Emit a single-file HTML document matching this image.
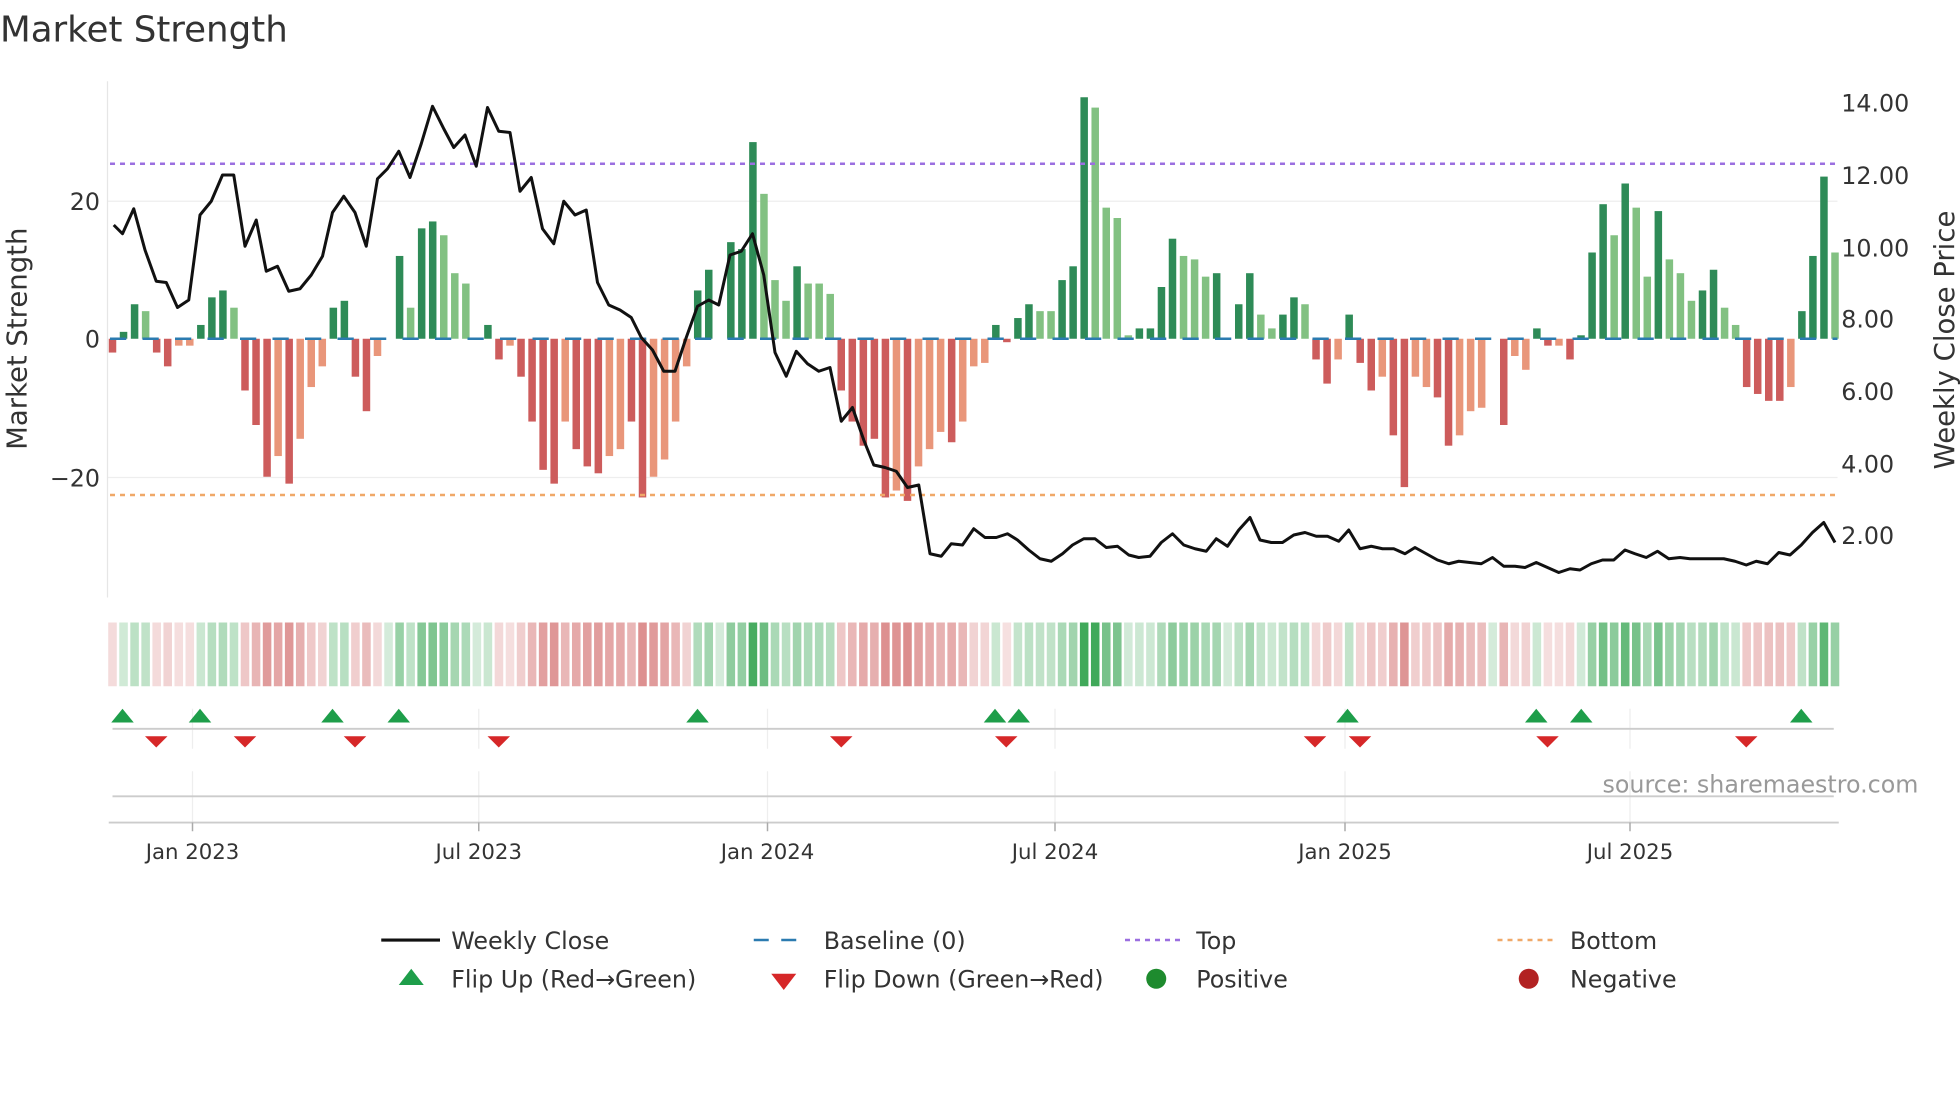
<!DOCTYPE html>
<html><head><meta charset="utf-8">
<style>
html,body{margin:0;padding:0;background:#fff;}
svg{display:block;}
text{font-family:"DejaVu Sans","Liberation Sans",sans-serif;fill:#333;}
</style></head>
<body>
<svg id="s" width="1960" height="1102" viewBox="0 0 1568 881.6" xmlns="http://www.w3.org/2000/svg">
<rect width="1568" height="882" fill="#fff"/>
<text x="0" y="33" font-size="28.5">Market Strength</text>
<g stroke="#eeeeee" stroke-width="1">
<line x1="86" y1="161" x2="1470" y2="161"/>
<line x1="86" y1="382" x2="1470" y2="382"/>
</g>
<line x1="86" y1="65" x2="86" y2="478" stroke="#e6e6e6" stroke-width="1"/>
<g id="bars"></g>
<g id="zero"></g>
<line x1="88" y1="131" x2="1470" y2="131" stroke="#9b6fe0" stroke-width="2" stroke-dasharray="4 4"/>
<line x1="88" y1="396" x2="1470" y2="396" stroke="#f0a868" stroke-width="2" stroke-dasharray="4 4"/>
<polyline id="price" fill="none" stroke="#111" stroke-width="2.4" stroke-linejoin="round"/>
<g font-size="19" text-anchor="end">
<text x="80" y="168">20</text><text x="80" y="278">0</text><text x="80" y="389">−20</text>
</g>
<g font-size="19">
<text x="1473" y="89">14.00</text><text x="1473" y="147">12.00</text><text x="1473" y="205">10.00</text>
<text x="1473" y="262">8.00</text><text x="1473" y="320">6.00</text><text x="1473" y="378">4.00</text>
<text x="1473" y="435">2.00</text>
</g>
<text transform="translate(21,271) rotate(-90)" font-size="22" text-anchor="middle">Market Strength</text>
<text transform="translate(1563,272) rotate(-90)" font-size="22" text-anchor="middle">Weekly Close Price</text>
<g id="heat"></g>
<g stroke="#eeeeee" stroke-width="1" id="vgrid"></g>
<line x1="90" y1="583" x2="1467" y2="583" stroke="#cccccc" stroke-width="1.5"/>
<g id="flips"></g>
<line x1="90" y1="637" x2="1467" y2="637" stroke="#cccccc" stroke-width="1.5"/>
<line x1="87" y1="658" x2="1471" y2="658" stroke="#cccccc" stroke-width="1.5"/>
<g id="ticks" stroke="#aaa" stroke-width="1.2"></g>
<text x="1282" y="634" font-size="19" style="fill:#999">source: sharemaestro.com</text>
<g font-size="17" text-anchor="middle">
<text x="154" y="687">Jan 2023</text><text x="383" y="687">Jul 2023</text><text x="614" y="687">Jan 2024</text>
<text x="844" y="687">Jul 2024</text><text x="1076" y="687">Jan 2025</text><text x="1304" y="687">Jul 2025</text>
</g>
<line x1="305" y1="752" x2="352" y2="752" stroke="#111" stroke-width="2.5"/>
<text x="361" y="759" font-size="19">Weekly Close</text>
<line x1="603" y1="752" x2="647" y2="752" stroke="#2b7bb0" stroke-width="2" stroke-dasharray="12 10"/>
<text x="659" y="759" font-size="19">Baseline (0)</text>
<line x1="900" y1="752" x2="945" y2="752" stroke="#9b6fe0" stroke-width="2" stroke-dasharray="4 4"/>
<text x="957" y="759" font-size="19">Top</text>
<line x1="1198" y1="752" x2="1243" y2="752" stroke="#f0a868" stroke-width="2" stroke-dasharray="4 4"/>
<text x="1256" y="759" font-size="19">Bottom</text>
<polygon points="319,788 339,788 329,775" fill="#1e9e4a"/>
<text x="361" y="790" font-size="19">Flip Up (Red→Green)</text>
<polygon points="617,779 637,779 627,792" fill="#d62728"/>
<text x="659" y="790" font-size="19">Flip Down (Green→Red)</text>
<circle cx="925" cy="783" r="8" fill="#1e8b2e"/>
<text x="957" y="790" font-size="19">Positive</text>
<circle cx="1223" cy="783" r="8" fill="#b22222"/>
<text x="1256" y="790" font-size="19">Negative</text>
</svg>
<script>
(function(){
var NS="http://www.w3.org/2000/svg";
function el(t,a,p){var e=document.createElementNS(NS,t);for(var k in a)e.setAttribute(k,a[k]);p.appendChild(e);return e;}
var B=[[-2,0],[1,0],[5,0],[4,1],[-2,0],[-4,0],[-1,1],[-1,1],[2,0],[6,0],[7,0],[4.5,1],[-7.5,0],[-12.5,0],[-20,0],[-17,1],[-21,0],[-14.5,1],[-7,1],[-4,1],[4.5,0],[5.5,0],[-5.5,0],[-10.5,0],[-2.5,1],[0,0],[12,0],[4.5,1],[16,0],[17,0],[15,1],[9.5,1],[8,1],[0,0],[2,0],[-3,0],[-1,1],[-5.5,0],[-12,0],[-19,0],[-21,0],[-12,1],[-16,0],[-18.5,0],[-19.5,0],[-17,1],[-16,1],[-12,0],[-23,0],[-20,1],[-17.5,1],[-12,1],[-4,1],[7,0],[10,0],[0,0],[14,0],[13,0],[28.5,0],[21,1],[8.5,1],[5.5,1],[10.5,0],[8,1],[8,1],[6.5,1],[-7.5,0],[-12,0],[-15.5,0],[-14.5,0],[-23,0],[-22,1],[-23.5,0],[-18.5,1],[-16,1],[-13.5,1],[-15,0],[-12,1],[-4,1],[-3.5,1],[2,0],[-0.5,0],[3,0],[5,0],[4,1],[4,1],[8.5,0],[10.5,0],[35,0],[33.5,1],[19,1],[17.5,1],[0.5,1],[1.5,0],[1.5,0],[7.5,0],[14.5,0],[12,1],[11.5,1],[9,1],[9.5,0],[0,0],[5,0],[9.5,0],[3.5,1],[1.5,1],[3.5,0],[6,0],[5,1],[-3,0],[-6.5,0],[-3,1],[3.5,0],[-3.5,0],[-7.5,0],[-5.5,1],[-14,0],[-21.5,0],[-5.5,1],[-7,1],[-8.5,0],[-15.5,0],[-14,1],[-10.5,1],[-10,1],[0,0],[-12.5,0],[-2.5,1],[-4.5,1],[1.5,0],[-1,0],[-1,1],[-3,0],[0.5,0],[12.5,0],[19.5,0],[15,1],[22.5,0],[19,1],[9,1],[18.5,0],[11.5,1],[9.5,1],[5.5,1],[7,0],[10,0],[4.5,1],[2,1],[-7,0],[-8,0],[-9,0],[-9,0],[-7,1],[4,0],[12,0],[23.5,0],[12.5,1]];
var n=B.length,x0=90,x1=1468,st=(x1-x0)/(n-1);
var bars=document.getElementById('bars'),heat=document.getElementById('heat');
for(var i=0;i<n;i++){
 var v=B[i][0],lt=B[i][1],cx=x0+i*st,h=Math.abs(v)*5.52;
 var c=v>=0?(lt?'#82c182':'#2e8b57'):(lt?'#e9967a':'#cd5c5c');
 if(h>0.3) el('rect',{x:cx-3,y:v>=0?271-h:271,width:6,height:h,fill:c},bars);
 var m=Math.min(1,Math.abs(v)/30);
 var hc;
 if(v>=0){var a=0.22+0.75*m;hc='rgba(58,166,85,'+a.toFixed(2)+')';}
 else{var a=0.18+0.65*m;hc='rgba(205,92,92,'+a.toFixed(2)+')';}
 el('rect',{x:cx-st/2+1,y:498,width:st-2,height:51,fill:hc},heat);
}
var z=document.getElementById('zero');
el('line',{x1:88,y1:271,x2:1470,y2:271,stroke:'#2b7bb0','stroke-width':2,'stroke-dasharray':'13 13'},z);
var P=[[91,180],[98,187],[107,167],[116,200],[125,225],[133,226],[142,246],[151,240],[160,172],[169,161],[178,140],[187,140],[196,197],[205,176],[213,217],[222,213],[231,233],[240,231],[249,220],[258,205],[266,170],[275,157],[284,170],[293,197],[302,143],[310,135],[319,121],[328,142],[337,115],[346,85],[355,103],[363,118],[372,108],[381,133],[390,86],[399,105],[408,106],[416,153],[425,142],[434,183],[443,195],[451,161],[460,172],[469,168],[478,226],[487,244],[496,248],[505,254],[513,270],[522,280],[531,297],[540,297],[549,270],[558,245],[567,240],[575,244],[584,204],[593,201],[602,187],[611,220],[620,282],[629,301],[637,281],[646,291],[655,297],[664,294],[673,337],[682,326],[691,352],[699,372],[708,374],[717,377],[726,390],[735,388],[744,443],[753,445],[761,435],[770,436],[779,423],[788,430],[797,430],[806,427],[814,432],[823,440],[832,447],[841,449],[850,443],[858,436],[867,431],[876,431],[885,438],[894,437],[903,444],[911,446],[920,445],[929,434],[938,427],[947,436],[956,439],[965,441],[973,431],[982,437],[991,424],[1000,414],[1008,432],[1017,434],[1026,434],[1035,428],[1044,426],[1053,429],[1062,429],[1071,433],[1079,424],[1088,439],[1097,437],[1106,439],[1115,439],[1124,443],[1132,438],[1141,443],[1150,448],[1159,451],[1167,449],[1176,450],[1185,451],[1194,446],[1203,453],[1212,453],[1220,454],[1229,450],[1238,454],[1247,458],[1256,455],[1264,456],[1273,451],[1282,448],[1291,448],[1300,440],[1308,443],[1317,446],[1326,441],[1335,447],[1344,446],[1352,447],[1361,447],[1370,447],[1379,447],[1388,449],[1397,452],[1405,449],[1414,451],[1423,442],[1432,444],[1441,436],[1450,426],[1459,418],[1468,434]];
document.getElementById('price').setAttribute('points',P.map(function(p){return p.join(',');}).join(' '));
var G=[154,383,614,844,1076,1304],vg=document.getElementById('vgrid'),tk=document.getElementById('ticks');
G.forEach(function(g){
 el('line',{x1:g,y1:567,x2:g,y2:599},vg);
 el('line',{x1:g,y1:617,x2:g,y2:658},vg);
 el('line',{x1:g,y1:658,x2:g,y2:665},tk);
});
var f=document.getElementById('flips');
[98,160,266,319,558,796,815,1078,1229,1265,1441].forEach(function(x){el('polygon',{points:(x-9)+',578 '+(x+9)+',578 '+x+',567',fill:'#1e9e4a'},f);});
[125,196,284,399,673,805,1052,1088,1238,1397].forEach(function(x){el('polygon',{points:(x-9)+',589 '+(x+9)+',589 '+x+',598',fill:'#d62728'},f);});
})();
</script>
</body></html>
